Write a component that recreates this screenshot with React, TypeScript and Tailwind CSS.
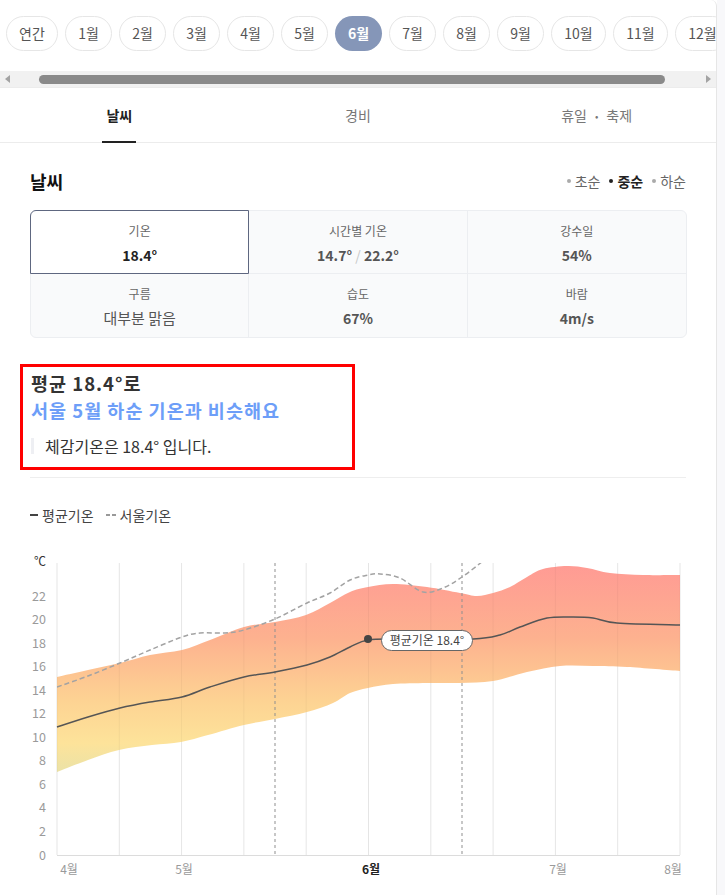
import React from 'react';

type Pt = [number, number];

const MONTHS = ['연간', '1월', '2월', '3월', '4월', '5월', '6월', '7월', '8월', '9월', '10월', '11월', '12월'];

const TOP: Pt[] = [
  [57, 677], [88, 670], [120, 663], [150, 655], [182, 650], [210, 640], [244, 627], [275, 622],
  [306, 615], [330, 603], [350, 592], [368, 587], [393, 584], [427, 587], [460, 593], [477, 596],
  [493, 593], [510, 587], [527, 577], [543, 569], [567, 566], [587, 568], [610, 573], [643, 575], [680, 575],
];
const BOTTOM: Pt[] = [
  [57, 772], [88, 760], [119, 750], [152, 745], [181, 742], [208, 735], [244, 725], [275, 719],
  [307, 712], [333, 703], [350, 693], [368, 688], [393, 684], [427, 683], [460, 683], [493, 681],
  [527, 672], [560, 666], [593, 666], [627, 667], [680, 671],
];
const AVG: Pt[] = [
  [57, 727], [88, 717], [120, 708], [150, 702], [182, 697], [210, 687], [244, 677], [275, 672],
  [307, 665], [330, 657], [350, 647], [368, 640], [400, 639], [473, 639], [500, 635], [520, 627],
  [547, 618], [573, 617], [593, 618], [617, 623], [680, 625],
];
const SEOUL: Pt[] = [
  [57, 687], [88, 676], [120, 663], [150, 650], [182, 637], [200, 633], [225, 633], [244, 630],
  [275, 619], [307, 603], [330, 593], [350, 580], [368, 575], [380, 574], [400, 578], [423, 592],
  [443, 588], [462, 577], [483, 561],
];

// catmull-rom -> cubic bezier segments (no leading M)
function segs(pts: Pt[]) {
  let d = '';
  for (let i = 0; i < pts.length - 1; i++) {
    const p0 = pts[i - 1] || pts[i];
    const p1 = pts[i];
    const p2 = pts[i + 1];
    const p3 = pts[i + 2] || p2;
    const c1x = p1[0] + (p2[0] - p0[0]) / 6;
    const c1y = p1[1] + (p2[1] - p0[1]) / 6;
    const c2x = p2[0] - (p3[0] - p1[0]) / 6;
    const c2y = p2[1] - (p3[1] - p1[1]) / 6;
    d += ` C${c1x.toFixed(1)},${c1y.toFixed(1)} ${c2x.toFixed(1)},${c2y.toFixed(1)} ${p2[0]},${p2[1]}`;
  }
  return d;
}

const line = (pts: Pt[]) => `M${pts[0][0]},${pts[0][1]}` + segs(pts);

const bandPath = () => {
  const rev = [...BOTTOM].reverse();
  return line(TOP) + ` L${rev[0][0]},${rev[0][1]}` + segs(rev) + ' Z';
};

const yOf = (v: number) => 855 - v * 11.77;

function TempChart() {
  const gridXs = Array.from({ length: 11 }, (_, i) => 57 + i * 62.3);
  const yTicks = [0, 2, 4, 6, 8, 10, 12, 14, 16, 18, 20, 22];
  const xLabels = [
    { t: '4월', x: 69 },
    { t: '5월', x: 184 },
    { t: '6월', x: 371, on: true },
    { t: '7월', x: 558 },
    { t: '8월', x: 673 },
  ];

  return (
    <svg width={717} height={355} viewBox="0 540 717 355" className="block">
      <defs>
        <linearGradient id="band" x1="0" y1="563" x2="0" y2="775" gradientUnits="userSpaceOnUse">
          <stop offset="0" stopColor="#ff9a94" />
          <stop offset="0.35" stopColor="#fdb18f" />
          <stop offset="0.65" stopColor="#fdd393" />
          <stop offset="0.85" stopColor="#fde39a" />
          <stop offset="1" stopColor="#e9e2a8" />
        </linearGradient>
        <clipPath id="plot">
          <rect x="57" y="563" width="623" height="292" />
        </clipPath>
      </defs>

      {/* grid */}
      {gridXs.map((x) => (
        <line key={x} x1={x} y1={563} x2={x} y2={855} stroke="#efefef" strokeWidth={1} />
      ))}

      <path d={bandPath()} fill="url(#band)" />

      {gridXs.map((x) => (
        <line key={'o' + x} x1={x} y1={563} x2={x} y2={855} stroke="#000" strokeOpacity={0.04} strokeWidth={1} />
      ))}

      <line x1={275} y1={563} x2={275} y2={855} stroke="#8f8f8f" strokeDasharray="3 3" />
      <line x1={462} y1={563} x2={462} y2={855} stroke="#8f8f8f" strokeDasharray="3 3" />
      <line x1={57} y1={855.5} x2={680} y2={855.5} stroke="#dcdcdc" />

      <g clipPath="url(#plot)">
        <path d={line(SEOUL)} fill="none" stroke="#a3a3a3" strokeWidth={1.5} strokeDasharray="5 3" />
      </g>
      <path d={line(AVG)} fill="none" stroke="#555" strokeWidth={1.5} />

      <circle cx={368} cy={639} r={4} fill="#444" />
      <rect x={381.5} y={630.5} width={91} height={20} rx={10} fill="#fff" stroke="#666" />
      <text x={427} y={644.5} textAnchor="middle" fontSize={12} fill="#444">
        평균기온 18.4°
      </text>

      <text x={46} y={566} textAnchor="end" fontSize={12} fill="#333">
        ℃
      </text>
      {yTicks.map((v) => (
        <text key={v} x={46} y={yOf(v) + 4.5} textAnchor="end" fontSize={12.5} fill="#9a9a9a">
          {v}
        </text>
      ))}
      {xLabels.map((l) => (
        <text
          key={l.t}
          x={l.x}
          y={874}
          textAnchor="middle"
          fontSize={12}
          fill={l.on ? '#222' : '#9a9a9a'}
          fontWeight={l.on ? 700 : 400}
        >
          {l.t}
        </text>
      ))}
    </svg>
  );
}

function StatCell({
  label,
  children,
  active,
  className = '',
}: {
  label: string;
  children: React.ReactNode;
  active?: boolean;
  className?: string;
}) {
  return (
    <div
      className={`relative flex h-[63px] flex-col items-center pt-[12px] ${active ? 'bg-white' : ''} ${className}`}
    >
      {active && (
        <div className="pointer-events-none absolute -inset-px rounded-tl-[6px] border border-[#5e6780]" />
      )}
      <span className="text-[12px] leading-[16px] text-[#666]">{label}</span>
      <span className="mt-[5px] leading-[20px]">{children}</span>
    </div>
  );
}

export default function App() {
  return (
    <div className="flex h-[895px] w-[725px] overflow-hidden bg-white font-['Noto_Sans_CJK_KR',sans-serif]">
      <div className="flex w-[717px] shrink-0 flex-col overflow-hidden rounded-tr-[6px] border-r border-[#e6e6e6]">
        {/* month pills */}
        <div className="flex gap-[7px] pl-[6px] pt-[16px]">
          {MONTHS.map((m) => {
            const on = m === '6월';
            const w = m === '연간' ? 'w-[52px]' : m.length === 3 ? 'w-[55px]' : 'w-[47px]';
            return (
              <div
                key={m}
                className={`flex h-[35px] shrink-0 items-center justify-center rounded-full text-[14px] ${w} ${
                  on ? 'bg-[#8596b8] font-bold text-white' : 'border border-[#e6e6e6] text-[#555]'
                }`}
              >
                {m}
              </div>
            );
          })}
        </div>

        {/* horizontal scrollbar */}
        <div className="mt-[20px] flex h-[17px] items-center border-b border-[#ececec] bg-[#f1f1f1]">
          <span className="ml-[5px] h-0 w-0 border-y-[4px] border-r-[5px] border-y-transparent border-r-[#a3a3a3]" />
          <div className="ml-[29px] h-[9px] w-[626px] rounded-full bg-[#8a8a8a]" />
          <span className="ml-auto mr-[5px] h-0 w-0 border-y-[4px] border-l-[5px] border-y-transparent border-l-[#a3a3a3]" />
        </div>

        {/* tabs */}
        <div className="grid h-[55px] grid-cols-3 border-b border-[#ececec] text-[14px]">
          <div className="relative flex items-center justify-center font-bold text-[#222]">
            날씨
            <span className="absolute bottom-[-1px] left-1/2 h-[2px] w-[34px] -translate-x-1/2 bg-[#222]" />
          </div>
          <div className="flex items-center justify-center text-[#777]">경비</div>
          <div className="flex items-center justify-center gap-[8px] text-[#777]">
            <span>휴일</span>
            <span className="text-[10px]">•</span>
            <span>축제</span>
          </div>
        </div>

        <div className="px-[30px]">
          {/* heading */}
          <div className="mt-[26px] flex h-[24px] items-center justify-between">
            <h2 className="text-[18px] font-bold text-[#111]">날씨</h2>
            <div className="flex items-center text-[14px] text-[#666]">
              <span className="mr-[4px] h-[4px] w-[4px] rounded-full bg-[#aaa]" />
              <span>초순</span>
              <span className="ml-[9px] mr-[4px] h-[4px] w-[4px] rounded-full bg-[#222]" />
              <span className="font-bold text-[#222]">중순</span>
              <span className="ml-[9px] mr-[4px] h-[4px] w-[4px] rounded-full bg-[#aaa]" />
              <span>하순</span>
            </div>
          </div>

          {/* stats grid */}
          <div className="mt-[17px] grid w-[657px] grid-cols-3 rounded-[6px] border border-[#eceef1] bg-[#f9fafb]">
            <StatCell label="기온" active className="border-b border-r border-[#eceef1]">
              <span className="text-[14px] font-bold text-[#222]">18.4°</span>
            </StatCell>
            <StatCell label="시간별 기온" className="border-b border-r border-[#eceef1]">
              <span className="text-[14px] font-bold text-[#555]">
                14.7° <span className="font-normal text-[#c8c8c8]">/</span> 22.2°
              </span>
            </StatCell>
            <StatCell label="강수일" className="border-b border-[#eceef1]">
              <span className="text-[14px] font-bold text-[#555]">54%</span>
            </StatCell>
            <StatCell label="구름" className="border-r border-[#eceef1]">
              <span className="text-[15px] text-[#555]">대부분 맑음</span>
            </StatCell>
            <StatCell label="습도" className="border-r border-[#eceef1]">
              <span className="text-[14px] font-bold text-[#555]">67%</span>
            </StatCell>
            <StatCell label="바람">
              <span className="text-[14px] font-bold text-[#555]">4m/s</span>
            </StatCell>
          </div>

          {/* summary */}
          <div className="-ml-[10px] mt-[26px] h-[106px] w-[335px] border-[3px] border-[#ff0000] pl-[8px] pt-[3px]">
            <p className="text-[18.5px] font-bold leading-[27px] tracking-[1px] text-[#333]">평균 18.4°로</p>
            <p className="text-[18.5px] font-bold leading-[27px] tracking-[1px] text-[#6d9ef8]">
              서울 5월 하순 기온과 비슷해요
            </p>
            <div className="mt-[10px] flex h-[24px] items-center">
              <span className="h-[16px] w-[3px] bg-[#eeeff3]" />
              <span className="ml-[11px] text-[16px] leading-[24px] text-[#333]">체감기온은 18.4° 입니다.</span>
            </div>
          </div>

          <div className="mt-[7px] h-px bg-[#eeeeee]" />

          {/* legend */}
          <div className="mt-[27px] flex h-[20px] items-center text-[14px] text-[#444]">
            <span className="mr-[4px] h-[2px] w-[8px] bg-[#444]" />
            <span>평균기온</span>
            <span className="ml-[12px] mr-[4px] flex gap-[2px]">
              <span className="h-[1.5px] w-[4px] bg-[#999]" />
              <span className="h-[1.5px] w-[4px] bg-[#999]" />
            </span>
            <span>서울기온</span>
          </div>
        </div>

        <div className="mt-[15px]">
          <TempChart />
        </div>
      </div>
      <div className="w-[8px] bg-[#f8f8fa]" />
    </div>
  );
}
